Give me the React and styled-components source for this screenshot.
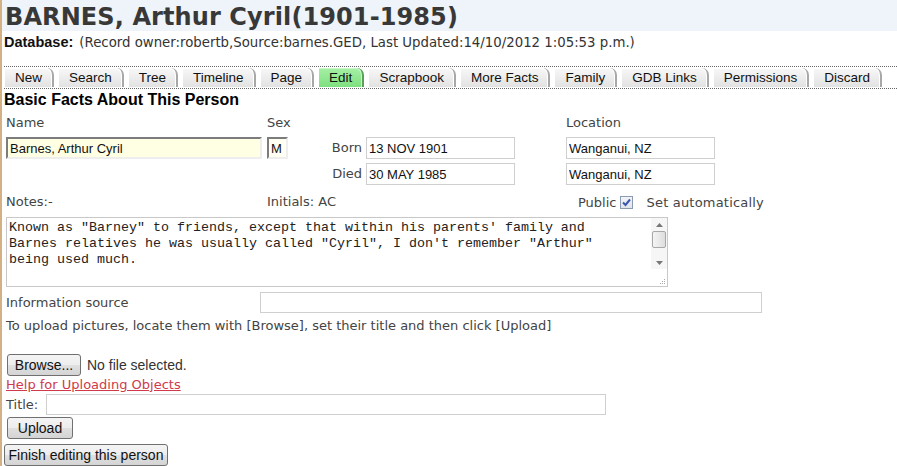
import React from "react";
import styled, { createGlobalStyle } from "styled-components";

const GlobalStyle = createGlobalStyle`
  body {
    margin: 0;
    background: #fff;
    font-family: "DejaVu Sans", Verdana, sans-serif;
    color: #444;
  }
`;

const tabs = [
  "New",
  "Search",
  "Tree",
  "Timeline",
  "Page",
  "Edit",
  "Scrapbook",
  "More Facts",
  "Family",
  "GDB Links",
  "Permissions",
  "Discard",
];

const notes =
  'Known as "Barney" to friends, except that within his parents\' family and\nBarnes relatives he was usually called "Cyril", I don\'t remember "Arthur"\nbeing used much.';

export default function App() {
  return (
    <Page>
      <GlobalStyle />
      <TitleBar>BARNES, Arthur Cyril(1901-1985)</TitleBar>
      <DbLine>
        <strong>Database:</strong>
        <span>
          (Record owner:robertb,Source:barnes.GED, Last Updated:14/10/2012
          1:05:53 p.m.)
        </span>
      </DbLine>

      <TabBar>
        {tabs.map((t) => (
          <Tab key={t} $active={t === "Edit"}>
            {t}
          </Tab>
        ))}
      </TabBar>

      <Heading>Basic Facts About This Person</Heading>

      <FactsGrid>
        <Label>Name</Label>
        <Label>Sex</Label>
        <span />
        <span />
        <Label>Location</Label>

        <InsetInput $width={256} defaultValue="Barnes, Arthur Cyril" />
        <InsetInput $width={21} $bg="#fffff2" defaultValue="M" />
        <DateLabel>Born</DateLabel>
        <PlainInput $width={149} defaultValue="13 NOV 1901" />
        <PlainInput $width={149} defaultValue="Wanganui, NZ" />

        <span />
        <span />
        <DateLabel>Died</DateLabel>
        <PlainInput $width={149} defaultValue="30 MAY 1985" />
        <PlainInput $width={149} defaultValue="Wanganui, NZ" />
      </FactsGrid>

      <NotesRow>
        <NotesLabel>Notes:-</NotesLabel>
        <Label>Initials: AC</Label>
        <PublicGroup>
          Public
          <CheckBox>
            <svg width="9" height="9" viewBox="0 0 9 9">
              <path
                d="M1 4.5 L3.5 7 L8 1.5"
                fill="none"
                stroke="#3a56b0"
                strokeWidth="2"
              />
            </svg>
          </CheckBox>
          <AutoText>Set automatically</AutoText>
        </PublicGroup>
      </NotesRow>

      <NotesBox>
        <NotesArea defaultValue={notes} />
        <ScrollBar>
          <ArrowBtn>
            <svg width="7" height="4" viewBox="0 0 7 4">
              <path d="M0 4 L3.5 0 L7 4 Z" fill="#777" />
            </svg>
          </ArrowBtn>
          <Thumb />
          <TrackGap />
          <ArrowBtn>
            <svg width="7" height="4" viewBox="0 0 7 4">
              <path d="M0 0 L3.5 4 L7 0 Z" fill="#777" />
            </svg>
          </ArrowBtn>
        </ScrollBar>
        <Grip>
          <svg width="8" height="8" viewBox="0 0 8 8">
            <g fill="#aaa">
              <rect x="6" y="2" width="1" height="1" />
              <rect x="4" y="4" width="1" height="1" />
              <rect x="6" y="4" width="1" height="1" />
              <rect x="2" y="6" width="1" height="1" />
              <rect x="4" y="6" width="1" height="1" />
              <rect x="6" y="6" width="1" height="1" />
            </g>
          </svg>
        </Grip>
      </NotesBox>

      <SourceRow>
        <Label>Information source</Label>
        <PlainInput $width={502} $height={21} />
      </SourceRow>

      <Hint>
        To upload pictures, locate them with [Browse], set their title and then
        click [Upload]
      </Hint>

      <FileRow>
        <Button $width={74}>Browse...</Button>
        <FileName>No file selected.</FileName>
      </FileRow>
      <HelpLink href="#">Help for Uploading Objects</HelpLink>
      <TitleRow>
        <Label>Title:</Label>
        <PlainInput $width={560} $height={21} />
      </TitleRow>
      <UploadRow>
        <Button $width={66}>Upload</Button>
      </UploadRow>
      <Button $width={164}>Finish editing this person</Button>
    </Page>
  );
}

const Page = styled.div`
  border-left: 2px solid #d3b185;
  min-height: 466px;
  box-sizing: border-box;
  padding-left: 2px;
`;

const TitleBar = styled.h1`
  margin: 0 0 0 -2px;
  padding: 3px 0 0 3px;
  height: 31px;
  box-sizing: border-box;
  background: #eef4f9;
  font-family: "DejaVu Sans", Verdana, sans-serif;
  font-weight: bold;
  font-size: 24px;
  line-height: 28px;
  color: #383838;
  letter-spacing: 0.1px;
`;

const DbLine = styled.div`
  display: flex;
  align-items: baseline;
  gap: 6px;
  height: 19px;
  margin-top: 3px;
  strong {
    font-family: "Liberation Sans", Arial, sans-serif;
    font-size: 14.5px;
    color: #111;
  }
  span {
    font-size: 13.3px;
    color: #333;
  }
`;

const TabBar = styled.div`
  display: flex;
  gap: 5px;
  margin-top: 13px;
  padding: 1px 0 0 1px;
  border-top: 1px dotted #666;
  border-bottom: 1px dotted #666;
  height: 20px;
  overflow: hidden;
`;

const Tab = styled.div`
  flex-shrink: 0;
  white-space: nowrap;
  height: 19px;
  padding: 0 10px 0 10px;
  box-sizing: border-box;
  font-family: "Liberation Sans", Arial, sans-serif;
  font-size: 13.5px;
  line-height: 19px;
  color: #111;
  background: ${(p) =>
    p.$active
      ? "linear-gradient(#a6f0a6, #7ee07e)"
      : "linear-gradient(#f8f8f8, #e2e2e2)"};
  border-right: 2px solid ${(p) => (p.$active ? "#5aa05a" : "#a8a8a8")};
  border-top-right-radius: 7px;
  box-shadow: inset -1px 1px 0 ${(p) => (p.$active ? "#c8f8c8" : "#fff")};
`;

const Heading = styled.h2`
  margin: 2px 0 0 0;
  font-family: "Liberation Sans", Arial, sans-serif;
  font-size: 16px;
  line-height: 18px;
  color: #000;
`;

const FactsGrid = styled.div`
  display: grid;
  grid-template-columns: 261px 60px 39px 200px 160px;
  grid-template-rows: 18px 22px 22px;
  row-gap: 4px;
  align-items: center;
  margin: 6px 0 0 2px;
  & > :nth-child(-n + 5) {
    align-self: start;
  }
`;

const Label = styled.span`
  font-size: 13px;
  line-height: 16px;
  color: #444;
  white-space: nowrap;
`;

const DateLabel = styled(Label)`
  text-align: right;
  padding-right: 4px;
`;

const InsetInput = styled.input`
  width: ${(p) => p.$width}px;
  height: 22px;
  box-sizing: border-box;
  padding: 0 2px;
  margin: 0;
  border: 2px solid;
  border-color: #7c7c7c #eeeeee #eeeeee #7c7c7c;
  background: ${(p) => p.$bg || "#ffffe4"};
  font-family: "Liberation Sans", Arial, sans-serif;
  font-size: 13px;
  color: #111;
  outline: none;
`;

const PlainInput = styled.input`
  width: ${(p) => p.$width}px;
  height: ${(p) => p.$height || 22}px;
  box-sizing: border-box;
  padding: 0 2px;
  margin: 0;
  border: 1px solid #cfcfcf;
  background: #fff;
  font-family: "Liberation Sans", Arial, sans-serif;
  font-size: 13px;
  color: #111;
  outline: none;
`;

const NotesRow = styled.div`
  display: flex;
  align-items: center;
  width: 758px;
  margin: 9px 0 0 2px;
  height: 16px;
`;

const NotesLabel = styled(Label)`
  width: 261px;
`;

const PublicGroup = styled.span`
  margin-left: auto;
  display: flex;
  align-items: center;
  font-size: 13px;
  color: #444;
`;

const CheckBox = styled.span`
  display: inline-flex;
  align-items: center;
  justify-content: center;
  width: 11px;
  height: 11px;
  margin: 0 13px 0 4px;
  border: 1px solid #8a9bb0;
  background: linear-gradient(#f2f4f8, #dfe4ec);
`;

const AutoText = styled.span`
  letter-spacing: 0.2px;
`;

const NotesBox = styled.div`
  position: relative;
  width: 662px;
  height: 70px;
  margin: 7px 0 0 2px;
`;

const NotesArea = styled.textarea`
  display: block;
  width: 100%;
  height: 100%;
  box-sizing: border-box;
  margin: 0;
  padding: 2px 20px 2px 2px;
  border: 1px solid #c8c8c8;
  font-family: "Liberation Mono", "Courier New", monospace;
  font-size: 13.33px;
  line-height: 16px;
  color: #222;
  overflow: hidden;
  resize: none;
  white-space: pre;
  outline: none;
`;

const ScrollBar = styled.div`
  position: absolute;
  top: 1px;
  right: 1px;
  width: 16px;
  height: 51px;
  display: flex;
  flex-direction: column;
  background: #f6f6f6;
`;

const ArrowBtn = styled.div`
  height: 13px;
  display: flex;
  align-items: center;
  justify-content: center;
`;

const Thumb = styled.div`
  height: 15px;
  margin: 0 1px;
  border: 1px solid #a8a8a8;
  border-radius: 2px;
  background: linear-gradient(90deg, #f4f4f4, #dedede);
`;

const TrackGap = styled.div`
  flex: 1;
`;

const Grip = styled.div`
  position: absolute;
  right: 2px;
  bottom: 2px;
  width: 8px;
  height: 8px;
  display: flex;
`;

const SourceRow = styled.div`
  display: grid;
  grid-template-columns: 254px auto;
  align-items: center;
  margin: 5px 0 0 2px;
`;

const Hint = styled.div`
  margin: 5px 0 0 2px;
  font-size: 13px;
  line-height: 16px;
  color: #444;
`;

const FileRow = styled.div`
  display: flex;
  align-items: center;
  gap: 6px;
  margin: 20px 0 0 3px;
`;

const Button = styled.button`
  width: ${(p) => p.$width}px;
  height: 22px;
  margin: 0;
  padding: 0;
  box-sizing: border-box;
  border: 1px solid #707070;
  border-radius: 3px;
  background: linear-gradient(#f4f4f4 0%, #ededed 50%, #e0e0e0 51%, #d4d4d4 100%);
  font-family: "Liberation Sans", Arial, sans-serif;
  font-size: 14px;
  color: #111;
`;

const FileName = styled.span`
  font-family: "Liberation Sans", Arial, sans-serif;
  font-size: 14px;
  color: #333;
`;

const HelpLink = styled.a`
  display: block;
  margin: 1px 0 0 2px;
  font-size: 13px;
  line-height: 16px;
  color: #d03a4a;
  text-decoration: underline;
`;

const TitleRow = styled.div`
  display: flex;
  align-items: center;
  gap: 8px;
  margin: 1px 0 0 2px;
`;

const UploadRow = styled.div`
  margin: 2px 0 5px 3px;
`;
